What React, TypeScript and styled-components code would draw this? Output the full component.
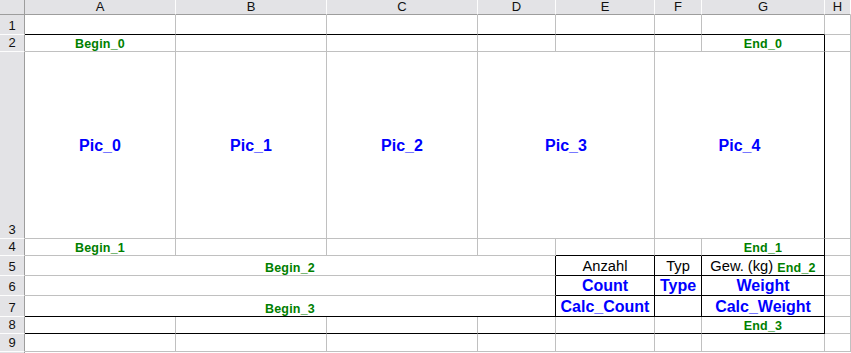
import React from 'react';
import styled, { createGlobalStyle } from 'styled-components';

const Global = createGlobalStyle`
  html, body { margin: 0; padding: 0; background: #fff; }
  * { box-sizing: border-box; }
`;

const FONT = `"Liberation Sans", Arial, sans-serif`;
const GRID = '#c0c0c0';
const HEAD_BG = '#e3e3e6';

const Sheet = styled.div`
  display: grid;
  grid-template-columns: 25px 151px 151px 151px 78px 99px 47px 123px 1fr;
  grid-template-rows: 15px 20px 17px 187px 17px 20px 20px 21px 17px 18px 1fr;
  width: 851px;
  height: 353px;
  overflow: hidden;
  font-family: ${FONT};
  background: #fff;
`;

const Corner = styled.div`
  grid-column: 1;
  grid-row: 1;
  background: ${HEAD_BG};
  border-right: 1px solid #9d9d9d;
  border-bottom: 1px solid #9d9d9d;
`;

const ColHead = styled.div<{ $c: number }>`
  grid-column: ${p => p.$c};
  grid-row: 1;
  background: ${HEAD_BG};
  border-right: 1px solid #fdfdfd;
  border-bottom: 1px solid #9d9d9d;
  display: flex;
  align-items: center;
  justify-content: center;
  font-size: 13px;
  line-height: 14px;
  color: #111;
`;

const RowHead = styled.div<{ $r: number }>`
  grid-column: 1;
  grid-row: ${p => p.$r};
  background: ${HEAD_BG};
  border-right: 1px solid #9d9d9d;
  border-bottom: 1px solid #fdfdfd;
  display: flex;
  align-items: flex-end;
  justify-content: center;
  padding-bottom: 1px;
  font-size: 13px;
  line-height: 14px;
  color: #111;
`;

const Cell = styled.div<{
  $c: number;
  $r: number;
  $span?: number;
  $rb?: boolean;
  $bb?: boolean;
  $mid?: boolean;
}>`
  grid-column: ${p => p.$c} / span ${p => p.$span ?? 1};
  grid-row: ${p => p.$r};
  border-right: 1px solid ${p => (p.$rb ? '#000' : GRID)};
  border-bottom: 1px solid ${p => (p.$bb ? '#000' : GRID)};
  display: flex;
  justify-content: center;
  align-items: ${p => (p.$mid ? 'center' : 'flex-end')};
  white-space: nowrap;
  overflow: hidden;
  min-width: 0;
`;

type Tone = 'tag' | 'pic' | 'field' | 'head';

const Label = styled.span<{ $tone: Tone }>`
  font-family: ${FONT};
  font-weight: ${p => (p.$tone === 'head' ? 400 : 700)};
  font-size: ${p =>
    p.$tone === 'tag' ? '12.5px' : p.$tone === 'head' ? '14.7px' : '16px'};
  line-height: ${p => (p.$tone === 'tag' ? '14px' : '17px')};
  letter-spacing: ${p => (p.$tone === 'tag' ? '0.2px' : '0')};
  color: ${p =>
    p.$tone === 'tag' ? '#008000' : p.$tone === 'head' ? '#000' : '#0000ff'};
  padding-bottom: ${p => (p.$tone === 'field' ? '1px' : '0')};
`;

const Gap = styled.span`
  display: inline-block;
  width: 4px;
`;

type Spec = {
  c: number;
  span?: number;
  rb?: boolean;
  bb?: boolean;
  mid?: boolean;
  text?: React.ReactNode;
  tone?: Tone;
};

// column index: A=2 ... H=9
const rows: Spec[][] = [
  // row 1
  [
    { c: 2, bb: true },
    { c: 3, bb: true },
    { c: 4, bb: true },
    { c: 5, bb: true },
    { c: 6, bb: true },
    { c: 7, bb: true },
    { c: 8, bb: true },
    { c: 9 },
  ],
  // row 2
  [
    { c: 2, text: 'Begin_0', tone: 'tag' },
    { c: 3 },
    { c: 4 },
    { c: 5 },
    { c: 6 },
    { c: 7 },
    { c: 8, rb: true, text: 'End_0', tone: 'tag' },
    { c: 9 },
  ],
  // row 3
  [
    { c: 2, mid: true, text: 'Pic_0', tone: 'pic' },
    { c: 3, mid: true, text: 'Pic_1', tone: 'pic' },
    { c: 4, mid: true, text: 'Pic_2', tone: 'pic' },
    { c: 5, span: 2, mid: true, text: 'Pic_3', tone: 'pic' },
    { c: 7, span: 2, rb: true, mid: true, text: 'Pic_4', tone: 'pic' },
    { c: 9 },
  ],
  // row 4
  [
    { c: 2, text: 'Begin_1', tone: 'tag' },
    { c: 3 },
    { c: 4 },
    { c: 5 },
    { c: 6, bb: true },
    { c: 7, bb: true },
    { c: 8, rb: true, bb: true, text: 'End_1', tone: 'tag' },
    { c: 9 },
  ],
  // row 5
  [
    { c: 2, span: 4, rb: true, text: 'Begin_2', tone: 'tag' },
    { c: 6, rb: true, bb: true, text: 'Anzahl', tone: 'head' },
    { c: 7, rb: true, bb: true, text: 'Typ', tone: 'head' },
    {
      c: 8,
      rb: true,
      bb: true,
      text: (
        <>
          <Label $tone="head">Gew. (kg)</Label>
          <Gap />
          <Label $tone="tag">End_2</Label>
        </>
      ),
    },
    { c: 9 },
  ],
  // row 6
  [
    { c: 2, span: 4, rb: true },
    { c: 6, rb: true, bb: true, text: 'Count', tone: 'field' },
    { c: 7, rb: true, bb: true, text: 'Type', tone: 'field' },
    { c: 8, rb: true, bb: true, text: 'Weight', tone: 'field' },
    { c: 9 },
  ],
  // row 7
  [
    { c: 2, span: 4, rb: true, bb: true, text: 'Begin_3', tone: 'tag' },
    { c: 6, rb: true, bb: true, text: 'Calc_Count', tone: 'field' },
    { c: 7, rb: true, bb: true },
    { c: 8, rb: true, bb: true, text: 'Calc_Weight', tone: 'field' },
    { c: 9 },
  ],
  // row 8
  [
    { c: 2, bb: true },
    { c: 3, bb: true },
    { c: 4, bb: true },
    { c: 5, bb: true },
    { c: 6, bb: true },
    { c: 7, bb: true },
    { c: 8, rb: true, bb: true, text: 'End_3', tone: 'tag' },
    { c: 9 },
  ],
  // row 9
  [
    { c: 2 },
    { c: 3 },
    { c: 4 },
    { c: 5 },
    { c: 6 },
    { c: 7 },
    { c: 8 },
    { c: 9 },
  ],
];

const letters = ['A', 'B', 'C', 'D', 'E', 'F', 'G', 'H'];

export default function App() {
  return (
    <>
      <Global />
      <Sheet>
        <Corner />
        {letters.map((l, i) => (
          <ColHead key={l} $c={i + 2}>
            {l}
          </ColHead>
        ))}
        {rows.map((cells, ri) => (
          <React.Fragment key={ri}>
            <RowHead $r={ri + 2}>{ri + 1}</RowHead>
            {cells.map((s, ci) => (
              <Cell
                key={ci}
                $c={s.c}
                $r={ri + 2}
                $span={s.span}
                $rb={s.rb}
                $bb={s.bb}
                $mid={s.mid}
              >
                {s.text !== undefined &&
                  (s.tone ? <Label $tone={s.tone}>{s.text}</Label> : s.text)}
              </Cell>
            ))}
          </React.Fragment>
        ))}
        <RowHead $r={11} />
      </Sheet>
    </>
  );
}
